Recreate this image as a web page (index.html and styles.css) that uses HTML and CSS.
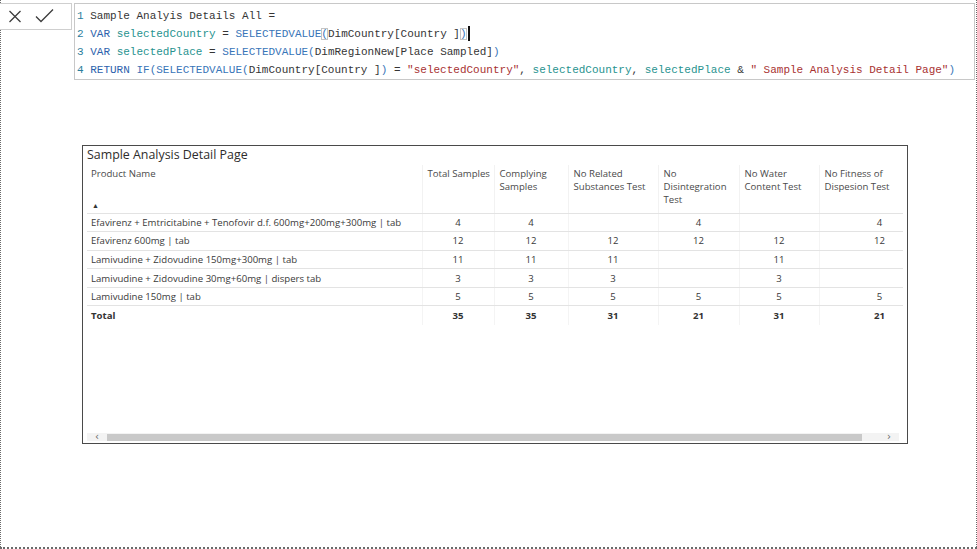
FILE: index.html
```html
<!DOCTYPE html>
<html>
<head>
<meta charset="utf-8">
<link rel="stylesheet" href="styles.css">
</head>
<body>
<div class="page">
  <div class="canvas">
    <section class="visual">
      <h2 class="vtitle">Sample Analysis Detail Page</h2>
      <div class="tablewrap">
        <table class="grid">
          <colgroup>
            <col class="c0"><col class="c1"><col class="c2"><col class="c3"><col class="c4"><col class="c5"><col class="c6">
          </colgroup>
          <thead>
            <tr>
              <th>Product Name<span class="sort">&#9650;</span></th>
              <th>Total Samples</th>
              <th>Complying Samples</th>
              <th>No Related Substances Test</th>
              <th>No Disintegration Test</th>
              <th>No Water Content Test</th>
              <th class="last">No Fitness of Dispesion Test</th>
            </tr>
          </thead>
          <tbody>
            <tr><td>Efavirenz + Emtricitabine + Tenofovir d.f. 600mg+200mg+300mg | tab</td><td>4</td><td>4</td><td></td><td>4</td><td></td><td>4</td></tr>
            <tr><td>Efavirenz 600mg | tab</td><td>12</td><td>12</td><td>12</td><td>12</td><td>12</td><td>12</td></tr>
            <tr><td>Lamivudine + Zidovudine 150mg+300mg | tab</td><td>11</td><td>11</td><td>11</td><td></td><td>11</td><td></td></tr>
            <tr><td>Lamivudine + Zidovudine 30mg+60mg | dispers tab</td><td>3</td><td>3</td><td>3</td><td></td><td>3</td><td></td></tr>
            <tr><td>Lamivudine 150mg | tab</td><td>5</td><td>5</td><td>5</td><td>5</td><td>5</td><td>5</td></tr>
            <tr class="total"><td>Total</td><td>35</td><td>35</td><td>31</td><td>21</td><td>31</td><td>21</td></tr>
          </tbody>
        </table>
      </div>
      <div class="scrollbar">
        <span class="arrow">&lsaquo;</span>
        <div class="track"><div class="thumb"></div></div>
        <span class="arrow">&rsaquo;</span>
      </div>
    </section>
  </div>

  <div class="formulabar">
    <div class="actions">
      <svg width="72" height="27" viewBox="0 0 72 27">
        <path d="M10.5 8 L21.5 19 M21.5 8 L10.5 19" stroke="#3c3c3c" stroke-width="1.3" fill="none"/>
        <path d="M37 13.5 L42 18.5 L54 6.5" stroke="#3c3c3c" stroke-width="1.3" fill="none"/>
      </svg>
    </div>
    <div class="editor">
      <div class="line"><span class="ln">1</span> <span class="tx">Sample Analyis Details All =</span></div>
      <div class="line"><span class="ln">2</span> <span class="kw">VAR</span> <span class="vr">selectedCountry</span> <span class="tx">=</span> <span class="fn">SELECTEDVALUE</span><span class="fn br">(</span><span class="tx">DimCountry[Country ]</span><span class="fn br">)</span><span class="cursor"></span></div>
      <div class="line"><span class="ln">3</span> <span class="kw">VAR</span> <span class="vr">selectedPlace</span> <span class="tx">=</span> <span class="fn">SELECTEDVALUE(</span><span class="tx">DimRegionNew[Place Sampled]</span><span class="fn">)</span></div>
      <div class="line"><span class="ln">4</span> <span class="kw">RETURN</span> <span class="fn">IF(SELECTEDVALUE(</span><span class="tx">DimCountry[Country ]</span><span class="fn">)</span><span class="tx"> = </span><span class="st">"selectedCountry"</span><span class="tx">, </span><span class="vr">selectedCountry</span><span class="tx">, </span><span class="vr">selectedPlace</span><span class="tx"> &amp; </span><span class="st">" Sample Analysis Detail Page"</span><span class="fn">)</span></div>
    </div>
  </div>
</div>
</body>
</html>
```

FILE: styles.css
```css
* { box-sizing: border-box; }
html, body { margin: 0; padding: 0; background: #fff; }
body { width: 977px; height: 549px; overflow: hidden; }

.page {
  position: relative;
  width: 977px;
  height: 549px;
}

.canvas {
  width: 977px;
  height: 549px;
  border-style: dotted;
  border-color: #6a6a6a;
  border-width: 0 1px 2px 1px;
  padding-top: 145px;
  padding-left: 81px;
}

/* formula bar lies over the canvas */
.formulabar {
  position: absolute;
  top: 3px;
  left: 0;
  display: flex;
  gap: 2px;
  align-items: flex-start;
}
.actions {
  width: 72px;
  height: 27px;
  border: 1px solid #cfcfcf;
  border-left: none;
  background: #fff;
  display: flex;
}
.actions svg { display: block; margin: -1px 0 0 -1px; }

.editor {
  width: 901px;
  height: 77px;
  border: 1px solid #c8c8c8;
  background: #fff;
  padding: 3px 0 0 2px;
  font-family: "Liberation Mono", "DejaVu Sans Mono", monospace;
  font-size: 11px;
  line-height: 18px;
  color: #333;
}
.line { height: 18px; white-space: pre; }
.ln { color: #2b7d9c; }
.tx { color: #353535; }
.kw { color: #2d62ad; }
.fn { color: #3875b8; }
.vr { color: #27938f; }
.st { color: #a83232; }
.br { outline: 1px solid #c4c4c4; outline-offset: -1px; }
.cursor {
  display: inline-block;
  width: 2px;
  height: 15px;
  background: #111;
  vertical-align: -4px;
  margin-left: 1px;
}

/* visual */
.visual {
  width: 826px;
  height: 299px;
  border: 1px solid #4a4a4a;
  background: #fff;
  padding: 0 0 0 4px;
  display: flex;
  flex-direction: column;
}
.vtitle {
  margin: 0;
  height: 19px;
  font-family: "Open Sans", "Noto Sans", sans-serif;
  font-weight: 400;
  font-size: 12.4px;
  line-height: 16px;
  padding-top: 1px;
  color: #2e2d2c;
}
.tablewrap {
  width: 816px;
  height: 265px;
  overflow: hidden;
}
.grid {
  border-collapse: collapse;
  table-layout: fixed;
  width: 853px;
  font-family: "Open Sans", "Noto Sans", sans-serif;
  font-size: 9.6px;
  color: #3a3a3a;
}
col.c0 { width: 335px; }
col.c1 { width: 72px; }
col.c2 { width: 74px; }
col.c3 { width: 90px; }
col.c4 { width: 81px; }
col.c5 { width: 80px; }
col.c6 { width: 121px; }

.grid th {
  height: 48px;
  vertical-align: top;
  text-align: left;
  font-weight: 400;
  color: #4a4a4a;
  line-height: 13px;
  padding: 2px 3px 0 5px;
  border-right: 1px solid #f2f2f2;
  border-bottom: 1px solid #e3e3e3;
  position: relative;
}
.grid th:first-child { padding-left: 4px; }
.grid th.last { padding-right: 40px; }
.sort {
  position: absolute;
  left: 5px;
  bottom: 4px;
  font-size: 7px;
  line-height: 7px;
  color: #333;
}
.grid td {
  height: 18.6px;
  padding: 0 4px;
  text-align: center;
  border-right: 1px solid #f4f4f4;
  border-bottom: 1px solid #e3e3e3;
  white-space: nowrap;
  line-height: 17px;
}
.grid td:first-child { text-align: left; }
.grid tr.total td {
  font-weight: 700;
  border-bottom: none;
  color: #333;
}

.scrollbar {
  margin-top: 3px;
  height: 8px;
  width: 812px;
  display: flex;
  align-items: center;
  background: #f3f3f3;
  font-family: "DejaVu Sans", sans-serif;
  font-size: 10px;
  color: #666;
}
.arrow {
  width: 20px;
  text-align: center;
  line-height: 8px;
}
.track {
  flex: 1;
  height: 7px;
  display: flex;
}
.thumb {
  width: 755px;
  height: 7px;
  background: #c9c9c9;
}
```
